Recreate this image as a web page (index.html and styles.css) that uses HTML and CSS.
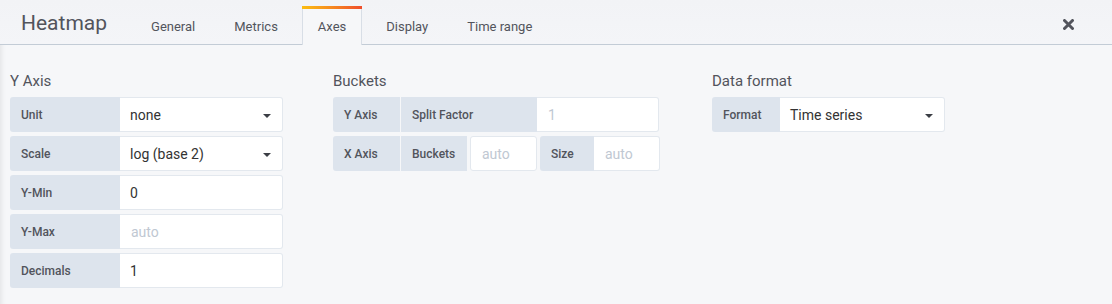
FILE: index.html
```html
<!DOCTYPE html>
<html lang="en">
<head>
  <meta charset="UTF-8" />
  <title>Heatmap - Axes</title>
  <link rel="stylesheet" href="styles.css">
</head>
<body>
  <!-- Panel editor header with tabs -->
  <div class="edit-header">
    <div class="edit-title">Heatmap</div>
    <ul class="tabs">
      <li class="tab">General</li>
      <li class="tab">Metrics</li>
      <li class="tab active">Axes</li>
      <li class="tab">Display</li>
      <li class="tab">Time range</li>
    </ul>
    <a class="close-btn" title="Close">
      <svg width="11" height="11" viewBox="0 0 11 11">
        <path d="M1.5 1.5 L9.5 9.5 M9.5 1.5 L1.5 9.5" stroke="#52545c" stroke-width="3" stroke-linecap="round"/>
      </svg>
    </a>
  </div>

  <!-- Axes tab content -->
  <div class="edit-body">
    <div class="section section-y">
      <h5 class="section-heading">Y Axis</h5>
      <div class="form-row">
        <label class="form-label w-110">Unit</label>
        <div class="form-select w-163">none<span class="caret"></span></div>
      </div>
      <div class="form-row">
        <label class="form-label w-110">Scale</label>
        <div class="form-select w-163">log (base 2)<span class="caret"></span></div>
      </div>
      <div class="form-row">
        <label class="form-label w-110">Y-Min</label>
        <div class="form-input w-163">0</div>
      </div>
      <div class="form-row">
        <label class="form-label w-110">Y-Max</label>
        <div class="form-input w-163 placeholder">auto</div>
      </div>
      <div class="form-row">
        <label class="form-label w-110">Decimals</label>
        <div class="form-input w-163">1</div>
      </div>
    </div>

    <div class="section section-buckets">
      <h5 class="section-heading">Buckets</h5>
      <div class="form-row">
        <label class="form-label w-67 joined">Y Axis</label>
        <label class="form-label w-136">Split Factor</label>
        <div class="form-input w-122 placeholder">1</div>
      </div>
      <div class="form-row">
        <label class="form-label w-67 joined">X Axis</label>
        <label class="form-label w-66">Buckets</label>
        <div class="form-input w-67 spaced placeholder">auto</div>
        <label class="form-label w-54 spaced-left">Size</label>
        <div class="form-input w-66 placeholder">auto</div>
      </div>
    </div>

    <div class="section">
      <h5 class="section-heading">Data format</h5>
      <div class="form-row">
        <label class="form-label w-68">Format</label>
        <div class="form-select w-165">Time series<span class="caret"></span></div>
      </div>
    </div>
  </div>
</body>
</html>
```

FILE: styles.css
```css
html, body {
  margin: 0;
  padding: 0;
  height: 100%;
  background: #f6f7f9;
  font-family: Roboto, "Liberation Sans", Arial, sans-serif;
  color: #52545c;
  overflow: hidden;
}

body {
  box-shadow: inset 6px 0 6px -6px rgba(0, 0, 0, 0.12);
}

/* Header */
.edit-header {
  height: 44px;
  display: flex;
  align-items: flex-end;
  background: linear-gradient(#f2f3f6, #f4f5f8);
  border-bottom: 1px solid #c3ccd6;
}

.edit-title {
  font-size: 21px;
  line-height: 46px;
  height: 44px;
  margin-left: 21px;
  color: #52545c;
}

.tabs {
  list-style: none;
  display: flex;
  gap: 9px;
  margin: 0 0 -1px 29px;
  padding: 0;
}

.tab {
  height: 38px;
  line-height: 42px;
  padding: 0 15px;
  font-size: 13px;
  color: #52545c;
  box-sizing: border-box;
}

.tab.active {
  position: relative;
  height: 39px;
  background: #f6f7f9;
  border-left: 1px solid #d8dee6;
  border-right: 1px solid #d8dee6;
  padding: 0 15px;
}

.tab.active::before {
  content: "";
  position: absolute;
  top: 0;
  left: -1px;
  right: -1px;
  height: 3px;
  background: linear-gradient(to right, #fbbd11, #f7941d 40%, #ef4d2b);
}

.close-btn {
  margin-left: auto;
  margin-right: 38px;
  align-self: center;
  height: 11px;
  margin-top: 4px;
  display: flex;
}

/* Body */
.edit-body {
  display: flex;
  padding: 26px 0 0 10px;
}

.section {
  display: flex;
  flex-direction: column;
}

.section-y {
  width: 273px;
  margin-right: 50px;
}

.section-buckets {
  width: 329px;
  margin-right: 50px;
}

.section-heading {
  margin: 0 0 6px 0;
  font-size: 15px;
  line-height: 20px;
  font-weight: 400;
  color: #52545c;
}

.form-row {
  display: flex;
  height: 35px;
  margin-bottom: 4px;
}

.form-label {
  display: flex;
  align-items: center;
  box-sizing: border-box;
  padding-left: 11px;
  background: #dde4ed;
  font-size: 12px;
  font-weight: 500;
  color: #52545c;
  border-radius: 3px 0 0 3px;
}

.form-label.joined {
  margin-right: 1px;
}

.form-label + .form-label {
  border-radius: 0;
}

.form-input, .form-select {
  display: flex;
  align-items: center;
  box-sizing: border-box;
  padding-left: 10px;
  background: #fff;
  border: 1px solid #e3e8ee;
  border-left: none;
  border-radius: 0 3px 3px 0;
  font-size: 14px;
  color: #333;
}

.form-select {
  position: relative;
}

.placeholder {
  color: #c0c8d2;
  padding-left: 11px;
}

.spaced {
  margin: 0 3px;
  border-left: 1px solid #e3e8ee;
  border-radius: 3px;
}

.spaced-left {
  border-radius: 3px 0 0 3px;
}

.caret {
  position: absolute;
  right: 11px;
  top: 16px;
  width: 0;
  height: 0;
  border-left: 4px solid transparent;
  border-right: 4px solid transparent;
  border-top: 4px solid #3b3e45;
}

.w-54 { width: 54px; }
.w-66 { width: 66px; }
.w-67 { width: 67px; }
.w-68 { width: 68px; }
.w-110 { width: 110px; }
.w-122 { width: 122px; }
.w-136 { width: 136px; }
.w-163 { width: 163px; }
.w-165 { width: 165px; }
```
